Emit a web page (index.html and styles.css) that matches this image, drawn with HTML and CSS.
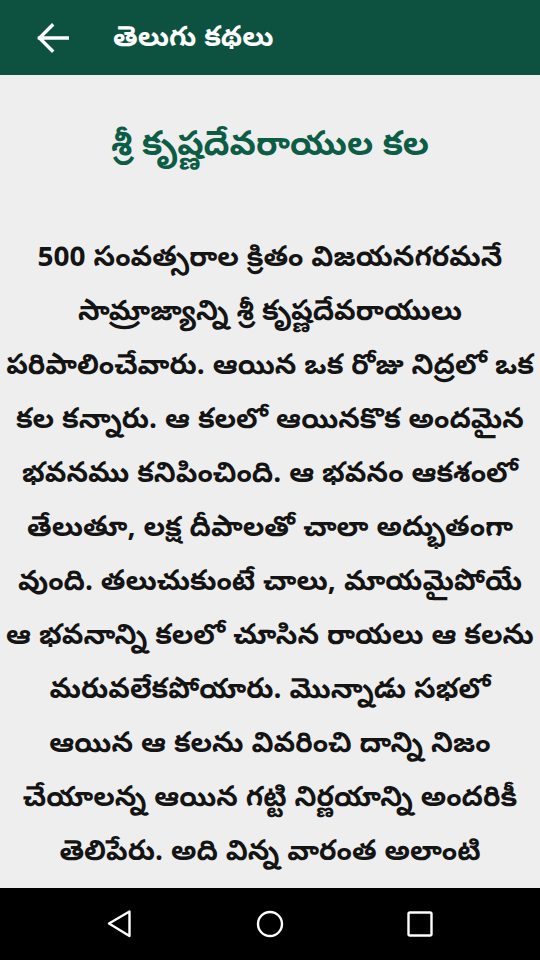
FILE: index.html
```html
<!DOCTYPE html>
<html lang="te">
<head>
<meta charset="utf-8">
<link rel="stylesheet" href="styles.css">
</head>
<body>
<div class="screen">
  <header class="appbar">
    <svg class="back" width="32" height="32" viewBox="0 0 32 32"><path d="M2.5 16H31M15 3.5L2.5 16L15 28.5" fill="none" stroke="#fff" stroke-width="3.4" stroke-linecap="square"/></svg>
    <div class="apptitle">తెలుగు కథలు</div>
  </header>
  <main class="content">
    <h1 class="story-title">శ్రీ కృష్ణదేవరాయుల కల</h1>
    <p class="story">500 సంవత్సరాల క్రితం విజయనగరమనే<br>సామ్రాజ్యాన్ని శ్రీ కృష్ణదేవరాయులు<br>పరిపాలించేవారు. ఆయిన ఒక రోజు నిద్రలో ఒక<br>కల కన్నారు. ఆ కలలో ఆయినకొక అందమైన<br>భవనము కనిపించింది. ఆ భవనం ఆకశంలో<br>తేలుతూ, లక్ష దీపాలతో చాలా అద్భుతంగా<br>వుంది. తలుచుకుంటే చాలు, మాయమైపోయే<br>ఆ భవనాన్ని కలలో చూసిన రాయలు ఆ కలను<br>మరువలేకపోయారు. మొన్నాడు సభలో<br>ఆయిన ఆ కలను వివరించి దాన్ని నిజం<br>చేయాలన్న ఆయిన గట్టి నిర్ణయాన్ని అందరికీ<br>తెలిపేరు. అది విన్న వారంత అలాంటి</p>
  </main>
  <nav class="navbar">
    <svg width="30" height="30" viewBox="0 0 30 30"><path d="M24.5 2.5 L4 14.5 L24.5 27 Z" fill="none" stroke="#fff" stroke-width="2.4" stroke-linejoin="round"/></svg>
    <svg width="30" height="30" viewBox="0 0 30 30"><circle cx="15" cy="15" r="12" fill="none" stroke="#fff" stroke-width="2.4"/></svg>
    <svg width="30" height="30" viewBox="0 0 30 30"><rect x="3.5" y="3.5" width="23" height="23" rx="1.5" fill="none" stroke="#fff" stroke-width="2.4"/></svg>
  </nav>
</div>
</body>
</html>
```
FILE: styles.css
```css
html, body {
  margin: 0;
  padding: 0;
}
body {
  width: 540px;
  height: 960px;
  overflow: hidden;
  font-family: "Noto Sans Telugu", "Noto Sans", "DejaVu Sans", sans-serif;
}
.screen {
  display: flex;
  flex-direction: column;
  height: 960px;
}
.appbar {
  height: 75px;
  flex: none;
  background: #0d5240;
  display: flex;
  align-items: center;
  padding-left: 37px;
  box-sizing: border-box;
}
.back {
  flex: none;
}
.apptitle {
  margin-left: 44px;
  margin-top: 6px;
  color: #fff;
  font-size: 28px;
  font-weight: 700;
  line-height: 36px;
}
.content {
  flex: 1;
  background: #eeeeee;
  overflow: hidden;
  text-align: center;
}
.story-title {
  margin: 46px 0 0;
  color: #0d5c45;
  font-size: 34px;
  font-weight: 700;
  line-height: 54px;
}
.story {
  margin: 59px 0 0;
  color: #141414;
  font-size: 28px;
  font-weight: 700;
  line-height: 54px;
}
.navbar {
  height: 72px;
  flex: none;
  background: #000;
  display: flex;
  align-items: center;
  justify-content: center;
  gap: 120px;
}
```
